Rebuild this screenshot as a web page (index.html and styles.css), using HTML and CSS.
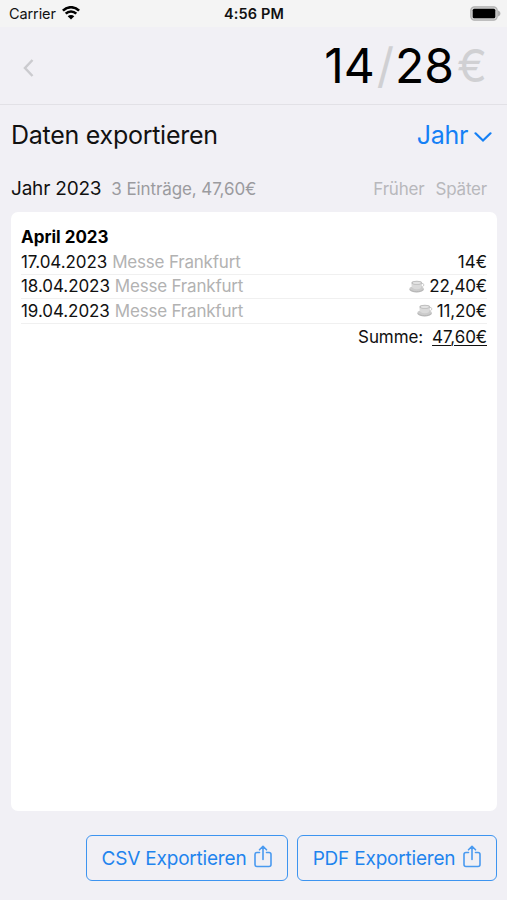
FILE: index.html
```
<!DOCTYPE html>
<html lang="de">

<head>
    <meta charset="UTF-8">
    <meta name="viewport" content="width=device-width, initial-scale=1.0">
    <title>Daten exportieren</title>
    <link rel="stylesheet" href="styles.css">
</head>

<body>
    <div class="status-bar">
        <div class="carrier">
            <span>Carrier</span>
            <svg class="wifi" width="18" height="14" viewBox="0 0 18 14">
                <path d="M0.9 4.6C5.4 0.1 12.6 0.1 17.1 4.6M3.7 7.6C6.7 4.7 11.3 4.7 14.3 7.6" fill="none" stroke="#000" stroke-width="2.6" />
                <path d="M9 13.6L5.7 10.2C7.6 8.5 10.4 8.5 12.3 10.2Z" />
            </svg>
        </div>
        <span class="time">4:56 PM</span>
        <svg class="battery" width="31" height="15" viewBox="0 0 31 15">
            <rect x="0.8" y="0.8" width="26.4" height="13.4" rx="3.6" fill="#d0d0d0" stroke="#b0b0b0" stroke-width="1.2" />
            <rect x="2.7" y="2.7" width="22.6" height="9.6" rx="1.6" />
            <path d="M28 4.5C31.2 5.5 31.2 9.5 28 10.5Z" fill="#b0b0b0" />
        </svg>
    </div>

    <header class="header">
        <svg class="back" width="12" height="20" viewBox="0 0 12 20">
            <path d="M10.5 2L3 10L10.5 18" />
        </svg>
        <div class="amount"><span>14</span><span class="slash">/</span><span>28</span><span class="euro">€</span></div>
    </header>

    <main class="content">
        <div class="title-row">
            <h1>Daten exportieren</h1>
            <div class="period">
                <span>Jahr</span>
                <svg width="18" height="12" viewBox="0 0 18 12">
                    <path d="M1.5 2.3L9 9.5L16.5 2.3" />
                </svg>
            </div>
        </div>

        <div class="summary-row">
            <span class="year">Jahr 2023</span>
            <span class="count">3 Einträge, 47,60€</span>
            <span class="nav earlier">Früher</span>
            <span class="nav later">Später</span>
        </div>

        <div class="card">
            <h2>April 2023</h2>
            <div class="entry">
                <span class="date">17.04.2023</span>
                <span class="place">Messe Frankfurt</span>
                <span class="price">14€</span>
            </div>
            <div class="entry">
                <span class="date">18.04.2023</span>
                <span class="place">Messe Frankfurt</span>
                <svg class="cup" width="16" height="13" viewBox="0 0 16 13">
                    <ellipse cx="7.6" cy="9.2" rx="7.4" ry="3.3" fill="#cbcbcb" />
                    <path d="M2.5 2.5H13V5C13 8 11 9.3 8 9.3S2.5 8 2.5 5Z" fill="#dadada" />
                    <path d="M12.8 3.5C15.6 3 15.7 6.8 12 7" fill="none" stroke="#c8c8c8" />
                    <ellipse cx="7.8" cy="2.7" rx="5.3" ry="2" fill="#bdbdbd" />
                    <ellipse cx="7.8" cy="2.9" rx="4" ry="1.1" fill="#e2e2e2" />
                    <path d="M1 9.7C4 12.4 11.3 12.4 14.2 9.7" fill="none" stroke="#b4b4b4" />
                </svg>
                <span class="price">22,40€</span>
            </div>
            <div class="entry">
                <span class="date">19.04.2023</span>
                <span class="place">Messe Frankfurt</span>
                <svg class="cup" width="16" height="13" viewBox="0 0 16 13">
                    <ellipse cx="7.6" cy="9.2" rx="7.4" ry="3.3" fill="#cbcbcb" />
                    <path d="M2.5 2.5H13V5C13 8 11 9.3 8 9.3S2.5 8 2.5 5Z" fill="#dadada" />
                    <path d="M12.8 3.5C15.6 3 15.7 6.8 12 7" fill="none" stroke="#c8c8c8" />
                    <ellipse cx="7.8" cy="2.7" rx="5.3" ry="2" fill="#bdbdbd" />
                    <ellipse cx="7.8" cy="2.9" rx="4" ry="1.1" fill="#e2e2e2" />
                    <path d="M1 9.7C4 12.4 11.3 12.4 14.2 9.7" fill="none" stroke="#b4b4b4" />
                </svg>
                <span class="price">11,20€</span>
            </div>
            <div class="total">
                <span>Summe:</span>
                <span class="total-value">47,60€</span>
            </div>
        </div>
    </main>

    <footer class="actions">
        <button class="csv">
            <span>CSV Exportieren</span>
            <svg width="18" height="23" viewBox="0 0 18 23">
                <path d="M5.5 7.5H3Q1 7.5 1 9.5V19.5Q1 21.5 3 21.5H15Q17 21.5 17 19.5V9.5Q17 7.5 15 7.5H12.5M9 14.5V1.5M5.5 4.8L9 1.3L12.5 4.8" />
            </svg>
        </button>
        <button class="pdf">
            <span>PDF Exportieren</span>
            <svg width="18" height="23" viewBox="0 0 18 23">
                <path d="M5.5 7.5H3Q1 7.5 1 9.5V19.5Q1 21.5 3 21.5H15Q17 21.5 17 19.5V9.5Q17 7.5 15 7.5H12.5M9 14.5V1.5M5.5 4.8L9 1.3L12.5 4.8" />
            </svg>
        </button>
    </footer>
</body>

</html>
```
FILE: styles.css
```
* {
    box-sizing: border-box;
}

body {
    margin: 0;
    height: 900px;
    display: flex;
    flex-direction: column;
    background-color: #f1f0f5;
    color: #111;
    font-family: Inter, "Liberation Sans", sans-serif;
    overflow: hidden;
}

.status-bar {
    height: 27px;
    padding: 0 6px 0 9px;
    display: grid;
    grid-template-columns: 1fr auto 1fr;
    align-items: center;
    background-color: #f4f4f4;
    font-size: 14.5px;
}

.carrier {
    display: flex;
    align-items: center;
    gap: 6px;
    letter-spacing: -0.1px;
}

.wifi {
    margin-top: -2px;
}

.time {
    margin-right: 2px;
    font-weight: 600;
    letter-spacing: 0.15px;
}

.battery {
    justify-self: end;
    margin-top: -1px;
}

.header {
    height: 78px;
    padding: 0 20px 0 22px;
    display: flex;
    align-items: center;
    justify-content: space-between;
    border-bottom: 1px solid #e2e1e6;
}

.back {
    margin-top: 4px;
}

.back path {
    fill: none;
    stroke: #cbcbcf;
    stroke-width: 2.5;
}

.amount {
    display: flex;
    color: #000;
    font-size: 48px;
    line-height: 77px;
}

.slash,
.euro {
    color: #d0d0d3;
}

.slash {
    margin: 0 1px 0 2px;
}

.euro {
    margin-left: 3px;
    font-size: 45px;
}

.content {
    flex: 1;
    padding: 0 10px 0 11px;
    display: flex;
    flex-direction: column;
}

.title-row {
    height: 60px;
    padding-right: 5px;
    display: flex;
    align-items: center;
    justify-content: space-between;
}

h1 {
    margin: 0;
    font-size: 25px;
    font-weight: 400;
    letter-spacing: -0.27px;
}

.period {
    display: flex;
    align-items: center;
    gap: 6px;
    color: #1580f5;
    font-size: 25px;
    letter-spacing: -0.3px;
}

.period svg {
    margin-top: 4px;
}

.period path {
    fill: none;
    stroke: #1580f5;
    stroke-width: 2.2;
    stroke-linecap: round;
}

.summary-row {
    height: 47px;
    padding-right: 10px;
    display: flex;
    align-items: baseline;
    line-height: 47px;
    font-size: 17px;
    letter-spacing: -0.1px;
}

.year {
    margin-right: 10px;
    font-size: 19px;
    letter-spacing: -0.2px;
}

.count {
    color: #9b9b9f;
}

.nav {
    color: #b8b8bc;
    letter-spacing: -0.2px;
}

.earlier {
    margin-left: auto;
}

.later {
    margin-left: 11px;
}

.card {
    height: 599px;
    padding: 13px 10px;
    background-color: #fff;
    border-radius: 7px;
    font-size: 17px;
}

h2 {
    margin: 0;
    font-size: 17px;
    font-weight: 700;
    line-height: 25px;
    color: #000;
}

.entry {
    height: 24.5px;
    display: flex;
    align-items: center;
    border-bottom: 1px solid #f0f0f0;
}

.date {
    letter-spacing: -0.07px;
}

.place {
    margin-left: 5px;
    color: #b2b2b2;
    letter-spacing: -0.2px;
}

.price {
    margin-left: auto;
}

.cup {
    margin-left: auto;
}

.cup + .price {
    margin-left: 4px;
    letter-spacing: -0.15px;
}

.total {
    display: flex;
    justify-content: flex-end;
    gap: 9px;
    line-height: 27px;
    letter-spacing: -0.1px;
}

.total-value {
    text-decoration: underline;
    text-underline-offset: 2px;
    text-decoration-thickness: 1px;
}

.actions {
    height: 89px;
    padding: 24px 10px 0;
    display: flex;
    justify-content: flex-end;
    gap: 9px;
}

button {
    height: 46px;
    padding: 0;
    display: flex;
    align-items: center;
    justify-content: center;
    gap: 8px;
    background-color: transparent;
    border: 1.5px solid #3d94f0;
    border-radius: 6px;
    color: #1f84ee;
    font-family: inherit;
    font-size: 19px;
    letter-spacing: -0.2px;
}

.csv {
    width: 202px;
}

.pdf {
    width: 200px;
}

button svg {
    margin-top: -3px;
}

button path {
    fill: none;
    stroke: #4a9af0;
    stroke-width: 1.6;
    stroke-linecap: round;
    stroke-linejoin: round;
}
```
